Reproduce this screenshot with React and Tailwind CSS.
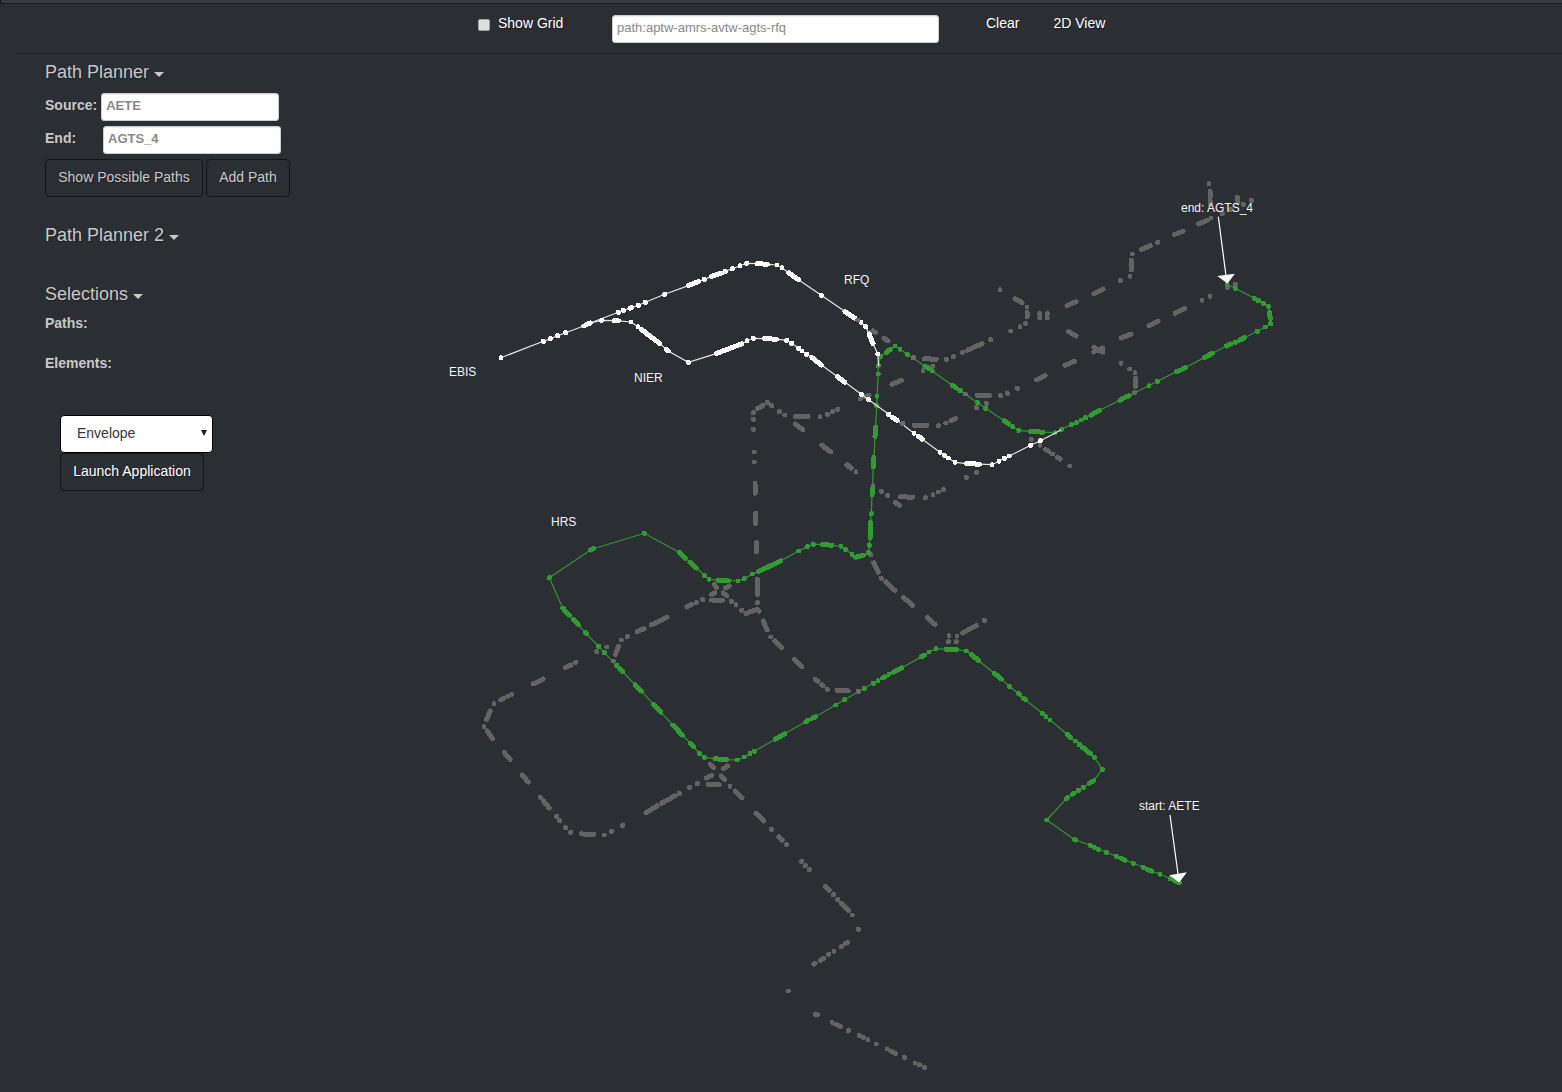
import React from "react";

// Beamline elements: "x,y" is one element, "x,y:x,y" is a run of tightly packed elements.
const IDLE = `
1209,183.7 1210,191:1210.3,196.7 1210.3,201:1210.3,205 1237.3,197.3:1237.6,202.7 1251.3,200.3 1243.3,204.3 1230.7,209.3 1222.3,213.7
1211,218 1207.3,220.3:1198.5,224 1183,231.2:1174.3,234.7 1157.7,242.3 1150.3,245.7:1141.5,249.5 1132.3,254 1131.3,260:1131.3,270
1130,276.3 1120.3,280.7 1103,289.5:1094,293.5 1076,301.7:1067,305.6 1047.3,313.6 1047.3,318 1039.7,313.6 1039.7,318
1068.3,331.2:1076,336 1094,347.5:1102.6,352 1102.6,348:1093.7,352 1121.3,338:1131,334.2 1149,325.7:1158,321.2 1175.3,313.2:1184.4,308.5
1202,300.3 1210,296.3 1227.3,287.3 1235.3,284.3 1121,363.3 1129.7,369 1135,372.7 1135.3,378.5:1135.3,386.5 1134.7,392.3
1065,365.3:1074.4,361.4 1036.7,379.7:1045,375.7 1000,289.7 1015,298.8:1022,302.5 1027,307 1027,312:1027,317
873,331:875.5,332.7 884,338.3:888,340.7 924.3,358.8:936.3,359.2 946.3,359.3 953.3,356.7 962.7,352.4 967.5,350.2:982,343.7 990.7,339.7
1010.7,331 1020,326.7 1025.5,323.5 923,370.7 932.7,366.3 892,384.2:901.3,380.3 1017.3,388.3 1007.3,393.3 1000.7,395.7
977,395.4:989.5,395.5 986.3,403.3 976.7,407.7 914,425.2:927,425.3 938.3,425.7 945.7,423 951,420.7:955.4,418.5 1031.3,439.3 1040,445.3
1045.6,449.4:1048.5,451.2 1052.5,454 1057.5,457.2:1060.3,459.2 1069.7,466 976.7,472.3 966.3,477.3 943.3,489.7 938.3,492 933,494.7 925.3,497.7
900.3,496.8:912.7,497.2 887.7,495.3 881.3,491.3 895.5,502.4:899.7,505.5 847,464.5:851,468 856,471.7 860.3,399 864,397:869,395.5 870.7,554.7
753.3,412.7 753.3,419.3 753.3,429.3 757.5,408.6:763,405.4 767.3,402.3 771.7,405.7 779.3,411.7 784.7,415 795.6,416.4:808.3,416.5
820,416.7 827.3,414.3 832.3,411.7 837.7,409.3 795.2,424:802.8,429.8 821.9,445.2:830.8,451.9 847,465:851,468
754.3,452 754.3,462 755,483.3:755.2,493.4 755.6,513.3:755.6,523.4 756.3,542.6:756.3,551.8 757.3,579:757.3,594.5 757.3,602.7
757,609.3:759,611.5 757,609.3:745.9,613.5 741.7,610.3 736,604.7 731.3,601.3 711.2,600:722.5,600.3 714.4,584.5:716.6,587.5
725.5,588:729.4,586 711.3,594.6:714.8,592.8 723.2,592.9:726.8,595.8 873.8,562.6:878.2,572.1 881.3,578.3 886,582:895,590.5
903.3,597.3:912.8,605.4 927.3,617.5:935,624.4 763.2,621:767.1,630 770.7,637 774.6,640.9:781.5,647.5 794.2,659.5:801.8,666.8
815.2,679.2:818,681.4 822,684.9:823,685.8 827.3,689.3 837,690.3:848.4,691 858.3,691.3 949,635.7 948.3,641.7 957,636 956.3,641.7
962.9,633:965.5,631.5 968.5,629.5:976.2,625.5 984.3,620.3 687,606.6:691.5,604.7 696.3,602.7 702.7,599.7 651.3,624.9:667,617.1 637.2,631.7:644,628.6
627.3,636.7 621.3,640 618.3,646.6:615.5,654.4 606.7,647 596.7,651.7 613.3,661 575.7,662.3 565.5,667.5:571,665 543.4,678.9:533.3,683.9
511.5,694.4 507.8,696.2 503.3,698.4:500.8,699.9 494,703.7 490.2,711:486.5,719.7 484,726.7 487.2,731:492.4,738.3 504.2,752.6:510.1,759.6
522.2,775:528.1,782 540.4,797.2 543.6,801:549.2,808 556.7,816.3 559.7,820.7 565.7,827.7 570.7,832.3 581.5,833.7 584,834.3:593.8,834.3
604.3,835 611.7,831.3 622.7,825.3 646,812.5:657,806 661.3,803.5:675,795.8 679.3,793.3 689.7,787.3 697.3,783.7 708,784.3:719.5,784.7
710.2,764.3:713.5,767.5 723.5,768.6:727.8,766 706.2,778:711.5,775.4 721.2,776:724.5,779.5 730,786.3 735.2,791:742,797.8
756,813.3:763.8,821 771.3,829.3 778.9,836.9:782,840 786.5,844.8 801.7,861.3 805.3,865.7 809.3,869.7 825.5,886.2:829.2,890.2 833.3,894.7
837.7,899.3 841.2,903.2:848.2,910.5 852.3,915 858.3,929.3 847.5,942.5:845.5,943.6 841.3,946.7 834,951.3 828.7,954.3 823.5,958.4:820.2,960.6
815,963.4:813.9,964.2 788.3,991 815.5,1014.4:817.5,1014.9 832,1022.3 835.7,1024.2:840.5,1026.5 848.3,1030.7 859.3,1035.3
863.3,1037.5 868,1039.7 876.3,1044 887,1049 890.8,1051.1:895.5,1053.5 904.3,1057.3 915,1063 919.3,1064.8 924.3,1067.3`;

const GREEN = `
1227,284.3 1235.3,288.3 1254.3,298.3 1258.3,300.7 1263.3,303.3 1268.3,306.3 1269.5,312.5:1270.3,318.5 1270.7,323.7 1265.3,327 1257.3,331.3
1244.5,337.8:1239.5,340.2 1235.3,342.3 1230.8,344:1226.5,346 1212.5,353.2:1204.2,357.6 1185.5,367.5:1182.7,369 1179.2,370.7:1176.5,371.6
1157.3,381.3 1149,385.7 1129,395.7:1126.3,396.8 1123.3,398.3:1120,400.2 1099.2,410.5:1091,415.2 1085.7,417.7 1081.3,420 1076.3,422.7
1071.3,424.7 1061.7,429.3 1055,432.7 1043,432.2:1030.6,431.4 1018.7,430.3 1012.7,426.7 1008.8,424:1004.2,420.8 985.7,408.3 977.7,402.7
960.3,390.7 956.5,388.2:952.2,385.2 932.2,371 929,368.5:925,366.2 907.3,354.3 900,349.3 895,346 890.7,349.3:886.2,352.5 880.3,356.7
878.3,365.7 878.3,374 877,396.3 876.7,405.7 875.5,427:875,436.5 874,457.5:873.3,467 872.5,488:872,495 871.3,513.7 870.5,522.5:870,538
869.3,545.3 868.3,552.7 863.3,555.3:855.5,557.2 852,554.3 845.3,549.3 841,546.3 832,545.3:822.5,544.4 813.3,544.3 807.3,546.7
798.7,551 780.8,560.8:758.5,571.6 752.3,574 744.3,578.7 738,581 728.5,580.7:718,580.4 709,579.3 704.3,575.3 696.5,568:690,562.3
685.3,558.3:679.5,552.5 644.3,533.3 593.5,548.7:590.5,550 549.3,577.7 562.8,608.2:569.2,615 573.1,619.1:578.2,624.6 585.2,632.5:586.5,633.8
598.7,646.3 604.3,652.7 616.7,665.3 619.3,668.3:622.5,671.5 635.2,684.9:641.5,691.1 653.5,704.2:660.8,712.1 672.9,725.2:682.5,735.1
690.2,743.2:693.8,746.8 699.3,753.3 704.3,757.3 714.9,758.8:726.5,759.6 737.3,760 744.3,757 750,753.6 754.3,751.3 775.3,739.2:784.8,733.8
806,721.5:808,720.4 812.3,718.3:815.5,716.8 835.7,705 844.7,699.7 864.3,688.3 873.3,683.3 878,680.7 882.9,677.9:885,676.8 889,674.3
893.5,672.2:901.8,667.8 921.2,656.9:924.2,655.4 929,652 936,648.7 946,649.4:956.5,649.6 966.3,651 971.2,654.5:978.5,660.5
994.2,673.2:1001.5,679.1 1009.7,686.7 1018.4,693.4:1019.6,694.2 1023.8,698.4:1025.2,699.6 1042.3,713.3 1046,716.7 1050,720
1067.2,734.2:1070.5,737.2 1075.3,741 1079.3,744.7 1082.8,747.4:1090.5,753.8 1094.3,757.3 1102.3,769.3 1093.5,780.8:1089.5,783.2
1083.3,787.3 1078.3,790.3 1074,793.4:1072.4,794.2 1067.6,797.5:1066.2,798.8 1046.7,820 1074.2,839.4:1075.8,840 1090.3,845.3 1094.3,847.3
1098.3,849.3 1106.3,852.3 1116.3,856.3 1121,858.4:1125,860.2 1133.3,863.3 1143.3,867.3 1147.3,869.4:1151.7,871.2 1160,874.3 1170.3,878.7
1174.2,880.4:1179.3,882.7`;

const RFQ = `
501,357.7 543.3,341.3 550.3,338.7 557.7,335.7 565.7,332.7 583.7,326 586.5,324.6:590.3,323 618.3,312.3 623.3,310.3 630,308.2:631.3,307.6
638.3,305.3 645.3,302.3 664.7,294.3 688.5,285.6:698.8,281.4 704.3,279.3 711.2,276.6:721.5,273.1 725.3,271.3 732.3,268.7 740,265.7
746.7,263.3 757,263.6:767.5,264.3 777,265 782,267.7 788.9,272.9:798.5,279.8 821.3,295.3 845,311.6:854.5,317.9 861,322.3 865.7,326.7
869.1,334:873,343.4 877.7,354`;

const NIER = `
590.3,323 601.7,320.3 614,320.6:618.5,320.8 631,322 638,326.7 641.5,329.5:659.8,343.6 666.4,349.4:668.2,350.9 688.3,362.3
716.2,353.6:741.8,343.8 747,340.7 753.3,338.3 764.5,338.7:776.5,339.2 786.7,340.3 791.7,343.3 798.7,348.3 802,351 806.7,354.3
811.9,357.5:821.5,365.1 837.2,376.5:844.8,382.1 861.3,394.3 868.7,399.7 888.7,414.3 892.4,417.1:897,420.3 914,433.3 918.3,436.1:922.2,439.2
940,452.3 944.3,455.3 948.3,458 955,462.3 966.6,463.6:979.5,464.2 992,464.7 999,461.3 1004.3,458.3 1009.3,456 1030.7,445.3 1040.3,440.7`;

// Idle elements that stay visible on top of a highlighted path.
const CROSSINGS = "857.7,320 902.7,423.3 913.3,357.7 965.3,394 873,485.7 613.3,661 858.3,691.3";

const tokens = (s) => s.trim().split(/\s+/);
const dots = (s) =>
  tokens(s)
    .map((t) => {
      const [a, b] = t.split(":");
      return `M${a}L${b || a}`;
    })
    .join("");
const line = (s) => "M" + tokens(s).join(" ").replace(/:/g, " ").split(" ").join("L");

function Elements({ data, className }) {
  return <path d={dots(data)} className={className} fill="none" strokeWidth="5" strokeLinecap="round" shapeRendering="crispEdges" />;
}

function Track({ data, className, tail = "" }) {
  return <path d={line(data) + tail} className={className} fill="none" strokeWidth="1.2" />;
}

function Beamline() {
  return (
    <svg viewBox="430 54 1132 1038" className="block h-[1038px] w-[1132px] shrink-0 font-['Liberation_Sans',Arial,sans-serif] text-[12px]">
      <Elements data={IDLE} className="stroke-[#636363]" />
      <Track data={GREEN} className="stroke-[#389238]" />
      <Elements data={GREEN} className="stroke-[#309b30]" />
      <Track data={RFQ} className="stroke-[#e4e4e4]" tail="L878.7,366" />
      <Track data={NIER} className="stroke-[#e4e4e4]" tail="L1061,430" />
      <Elements data={RFQ} className="stroke-white" />
      <Elements data={NIER} className="stroke-white" />
      <Elements data={CROSSINGS} className="stroke-[#6b6b6b]" />
      <g className="fill-white stroke-white">
        <path d="M1218.3 216.7L1226 276M1170 815L1178 874" strokeWidth="1.2" />
        <path d="M1217.3 276L1234.9 273.7L1227.5 283.6ZM1169.3 875.2L1186.9 872.3L1179.2 882.4Z" stroke="none" />
      </g>
      <g className="fill-[#f4f4f4]">
        <text x="449" y="376">EBIS</text>
        <text x="634" y="382">NIER</text>
        <text x="844" y="284">RFQ</text>
        <text x="551" y="526">HRS</text>
        <text x="1181" y="212">end: AGTS_4</text>
        <text x="1139" y="810">start: AETE</text>
      </g>
    </svg>
  );
}

const shadow = "[text-shadow:1px_1px_1px_rgba(0,0,0,0.3)]";
const field =
  "block h-7 rounded-[3px] border border-[#ccc] bg-white px-1 pb-[3px] text-[13px] text-[#888] shadow-[inset_0_1px_1px_rgba(0,0,0,0.075)] placeholder:text-[#888] placeholder:opacity-100 outline-none";
const button =
  "h-[38px] rounded-[4px] border border-[#121417] px-3 pb-[3px] text-[14px] leading-5 [text-shadow:1px_1px_1px_rgba(0,0,0,0.3)]";

function Heading({ children }) {
  return (
    <h4 className={"flex h-5 items-center gap-[5px] text-[18px] leading-5 " + shadow}>
      {children}
      <span className="mt-1 border-x-[5px] border-t-[5px] border-x-transparent border-t-[#c8c8c8]" />
    </h4>
  );
}

export default function App() {
  return (
    <div className="h-[1092px] w-[1562px] overflow-hidden bg-[#2b2e33] font-['Liberation_Sans',Arial,sans-serif] text-[14px] leading-5 text-[#c8c8c8]">
      <div className="h-1 border-b border-l border-[#15171a] bg-[#36393e]" />
      <header className="ml-[15px] flex h-[50px] items-start border-b border-[#202327] pl-[463px] text-white">
        <label className="mt-[9px] flex w-[134px] items-start gap-2">
          <input type="checkbox" className="mt-[6px] size-3 appearance-none rounded-[2px] border border-[#a6a6a6] bg-[#dedede]" />
          <span className={shadow}>Show Grid</span>
        </label>
        <input className={field + " mt-[11px] w-[327px]"} placeholder="path:aptw-amrs-avtw-agts-rfq" />
        <button className={"ml-[47px] mt-[9px] " + shadow}>Clear</button>
        <button className={"ml-[34px] mt-[9px] " + shadow}>2D View</button>
      </header>
      <div className="flex">
        <aside className="w-[430px] shrink-0 pl-[45px] pt-2">
          <Heading>Path Planner</Heading>
          <div className="mt-[11px] flex gap-1 font-bold">
            <label className="pt-[2px]">Source:</label>
            <input className={field + " w-[178px] font-bold"} placeholder="AETE" />
          </div>
          <div className="mt-[5px] flex font-bold">
            <label className="w-[58px] pt-[2px]">End:</label>
            <input className={field + " w-[178px] font-bold"} placeholder="AGTS_4" />
          </div>
          <div className="mt-[5px] flex gap-[3px]">
            <button className={button + " w-[158px] whitespace-nowrap"}>Show Possible Paths</button>
            <button className={button + " w-[84px] whitespace-nowrap"}>Add Path</button>
          </div>
          <div className="mt-7">
            <Heading>Path Planner 2</Heading>
          </div>
          <div className="mt-[39px]">
            <Heading>Selections</Heading>
          </div>
          <p className="mt-[9px] font-bold">Paths:</p>
          <p className="mt-5 font-bold">Elements:</p>
          <div className="ml-[15px] mt-[42px] flex flex-col items-start">
            <button className="flex h-[38px] w-[153px] items-center justify-between rounded-[4px] border border-black bg-white pb-[2px] pl-4 pr-[5px] text-[#33363b]">
              <span>Envelope</span>
              <span className="border-x-[3px] border-t-[6px] border-x-transparent border-t-[#222]" />
            </button>
            <button className={button + " w-[144px] whitespace-nowrap text-white"}>Launch Application</button>
          </div>
        </aside>
        <Beamline />
      </div>
    </div>
  );
}
